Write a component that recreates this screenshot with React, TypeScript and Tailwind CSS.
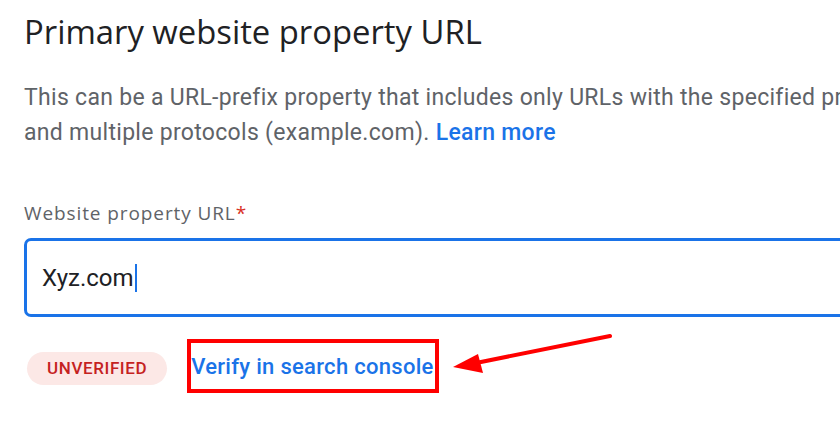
export default function App() {
  return (
    <div className="relative h-[434px] w-[840px] overflow-hidden bg-white font-['Roboto',sans-serif]">
      <div className="w-[1400px] pl-6">
        <h1 className="pt-[12px] font-['Open_Sans',sans-serif] text-[32.8px] leading-[40px] text-[#202124]">
          Primary website property URL
        </h1>

        <p className="mt-[28px] whitespace-nowrap text-[23px] leading-[35px] tracking-[0.3px] text-[#5f6368]">
          This can be a URL-prefix property that includes only URLs with the specified prefix, or a Domain property that includes all subdomains
          <br />
          and multiple protocols (example.com).{' '}
          <a className="font-medium text-[#1a73e8]">Learn more</a>
        </p>

        <label className="mt-[51px] block font-['Open_Sans',sans-serif] text-[19px] leading-[24px] tracking-[0.9px] text-[#5f6368]">
          Website property URL<span className="text-[#d93025]">*</span>
        </label>

        <div className="mt-[13px] flex h-[79px] w-[1360px] items-center rounded-[7px] border-[3px] border-[#1a73e8] px-[15px]">
          <span className="text-[24px] text-[#202124]">Xyz.com</span>
          <span className="ml-px h-[28px] w-[2px] bg-[#1a73e8]" />
        </div>

        <div className="mt-[22px] flex items-start gap-5">
          <span className="ml-[3px] mt-[13px] inline-flex h-[33px] items-center rounded-full bg-[#fce8e6] px-[20px] text-[17px] font-medium tracking-[0.6px] text-[#c5221f]">
            UNVERIFIED
          </span>
          <span className="inline-flex h-[54px] items-center border-4 border-[#ff0000] pr-px">
            <a className="text-[22px] font-medium tracking-[0.3px] text-[#1a73e8]">Verify in search console</a>
          </span>
        </div>
      </div>

      {/* annotation arrow */}
      <svg className="absolute left-0 top-0" width="840" height="434" viewBox="0 0 840 434">
        <line x1="610" y1="336" x2="476" y2="363" stroke="#ff0000" strokeWidth="4" strokeLinecap="round" />
        <polygon points="453,367 478,354 483,373" fill="#ff0000" />
      </svg>
    </div>
  );
}
